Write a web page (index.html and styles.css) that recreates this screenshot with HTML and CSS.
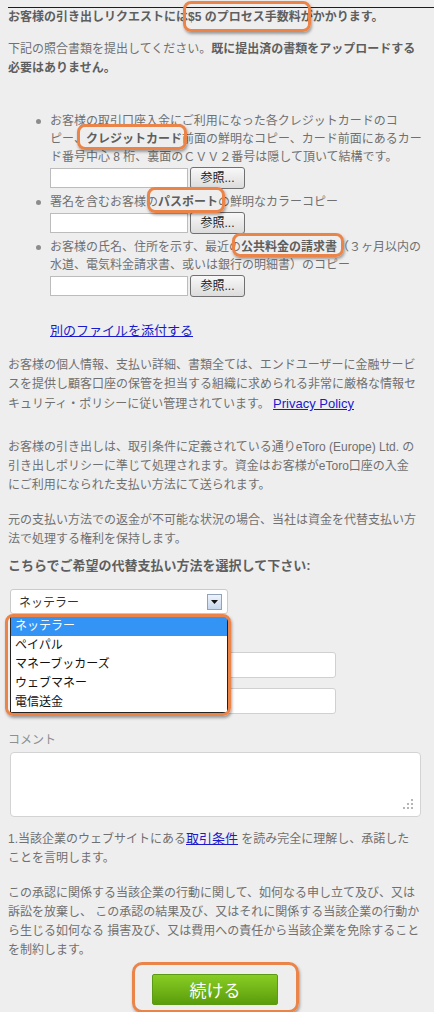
FILE: index.html
```html
<!DOCTYPE html>
<html lang="ja">
<head>
<meta charset="utf-8">
<title>引き出しリクエスト</title>
<link rel="stylesheet" href="styles.css">
</head>
<body>
<div class="topline"></div>
<main class="page">
  <p class="lead"><b>お客様の引き出しリクエストには<span class="mark mark-fee">$5 のプロセス手数料</span>がかかります。</b></p>
  <p class="intro">下記の照合書類を提出してください。<b>既に提出済の書類をアップロードする<br>必要はありません。</b></p>

  <ul class="docs">
    <li class="doc">
      <span class="dot"></span>
      <div class="doc-body">
        <div class="doc-text">お客様の取引口座入金にご利用になった各クレジットカードのコ<br>ピー、<b class="mark mark-card">クレジットカード</b>前面の鮮明なコピー、カード前面にあるカー<br>ド番号中心 8 桁、裏面のＣＶＶ２番号は隠して頂いて結構です。</div>
        <div class="file-row"><span class="file-input"></span><span class="browse">参照...</span></div>
      </div>
    </li>
    <li class="doc">
      <span class="dot"></span>
      <div class="doc-body">
        <div class="doc-text">署名を含むお客様の<b class="mark mark-passport">パスポート</b>の鮮明なカラーコピー</div>
        <div class="file-row"><span class="file-input"></span><span class="browse">参照...</span></div>
      </div>
    </li>
    <li class="doc">
      <span class="dot"></span>
      <div class="doc-body">
        <div class="doc-text">お客様の氏名、住所を示す、最近の<b class="mark mark-bill">公共料金の請求書</b>（３ヶ月以内の<br>水道、電気料金請求書、或いは銀行の明細書）のコピー</div>
        <div class="file-row"><span class="file-input"></span><span class="browse">参照...</span></div>
      </div>
    </li>
  </ul>

  <p class="more"><a href="#">別のファイルを添付する</a></p>

  <p class="info">お客様の個人情報、支払い詳細、書類全ては、エンドユーザーに金融サービ<br>スを提供し顧客口座の保管を担当する組織に求められる非常に厳格な情報セ<br>キュリティ・ポリシーに従い管理されています。 <a href="#">Privacy Policy</a></p>

  <p class="withdraw">お客様の引き出しは、取引条件に定義されている通りeToro (Europe) Ltd. の<br>引き出しポリシーに準じて処理されます。資金はお客様がeToro口座の入金<br>にご利用になられた支払い方法にて送られます。</p>

  <p class="refund">元の支払い方法での返金が不可能な状況の場合、当社は資金を代替支払い方<br>法で処理する権利を保持します。</p>

  <p class="choose">こちらでご希望の代替支払い方法を選択して下さい:</p>

  <div class="picker">
    <div class="select">
      <span>ネッテラー</span>
      <span class="arrow"><svg width="7" height="4" viewBox="0 0 7 4"><polygon points="0,0 7,0 3.5,4" fill="#111"/></svg></span>
    </div>
    <ul class="options">
      <li class="selected">ネッテラー</li>
      <li>ペイパル</li>
      <li>マネーブッカーズ</li>
      <li>ウェブマネー</li>
      <li>電信送金</li>
    </ul>
  </div>

  <div class="fields">
    <div class="field"></div>
    <div class="field"></div>
  </div>

  <p class="comment-label">コメント</p>
  <div class="comment">
    <svg width="10" height="10" viewBox="0 0 10 10">
      <rect x="8" y="0" width="2" height="2" fill="#b5b5b5"/>
      <rect x="4" y="4" width="2" height="2" fill="#b5b5b5"/>
      <rect x="8" y="4" width="2" height="2" fill="#b5b5b5"/>
      <rect x="0" y="8" width="2" height="2" fill="#b5b5b5"/>
      <rect x="4" y="8" width="2" height="2" fill="#b5b5b5"/>
      <rect x="8" y="8" width="2" height="2" fill="#b5b5b5"/>
    </svg>
  </div>

  <p class="ack">1.当該企業のウェブサイトにある<a href="#">取引条件</a> を読み完全に理解し、承諾した<br>ことを言明します。</p>

  <p class="waive">この承認に関係する当該企業の行動に関して、如何なる申し立て及び、又は<br>訴訟を放棄し、 この承認の結果及び、又はそれに関係する当該企業の行動か<br>ら生じる如何なる 損害及び、又は費用への責任から当該企業を免除すること<br>を制約します。</p>

  <div class="actions">
    <button class="continue" type="button">続ける</button>
  </div>
</main>
</body>
</html>
```

FILE: styles.css
```css
html, body {
  margin: 0;
  padding: 0;
}

body {
  background: #eeeeee;
  font-family: "Liberation Sans", "Noto Sans CJK JP", sans-serif;
  font-size: 12px;
  color: #707070;
}

.topline {
  margin: 7px 0 0 8px;
  height: 1px;
  background: #1e1e1e;
}

.page {
  padding: 0 12px 40px 8px;
}

p {
  margin: 0;
  line-height: 19px;
  white-space: nowrap;
}

b {
  color: #5e5e5e;
}

a {
  color: #1a1acc;
  text-decoration: underline;
  font-size: 13px;
}

.intro {
  margin-top: 13px;
}

/* document list */
.docs {
  list-style: none;
  margin: 34px 0 0;
  padding: 0 0 0 28px;
}

.doc {
  display: grid;
  grid-template-columns: 14px auto;
  line-height: 18px;
}

.doc + .doc {
  margin-top: 4px;
}

.dot {
  width: 5px;
  height: 5px;
  border-radius: 50%;
  background: #8c8c8c;
  margin-top: 7px;
}

.doc-text {
  white-space: nowrap;
}

.file-row {
  display: flex;
  align-items: center;
  gap: 2px;
  height: 22px;
  margin-top: 1px;
}

.file-input {
  width: 138px;
  height: 20px;
  box-sizing: border-box;
  background: #ffffff;
  border: 1px solid #bcbcbc;
}

.browse {
  width: 55px;
  height: 22px;
  box-sizing: border-box;
  border: 1px solid #707070;
  border-radius: 3px;
  background: linear-gradient(#f8f8f8, #dcdcdc);
  color: #222222;
  display: flex;
  align-items: center;
  justify-content: center;
}

.more {
  margin-top: 24px;
  padding-left: 42px;
}

.info {
  margin-top: 15px;
}

.withdraw {
  margin-top: 24px;
}

.refund {
  margin-top: 16px;
}

.choose {
  margin-top: 7px;
  font-size: 13px;
  font-weight: bold;
  color: #5e5e5e;
}

/* select + open dropdown */
.picker {
  position: relative;
  width: 218px;
  margin: 14px 0 0 2px;
}

.select {
  height: 25px;
  box-sizing: border-box;
  border: 1px solid #cbcbcb;
  border-radius: 3px;
  background: #ffffff;
  display: flex;
  align-items: center;
  justify-content: space-between;
  padding: 0 5px 0 8px;
  color: #333333;
}

.arrow {
  width: 15px;
  height: 16px;
  box-sizing: border-box;
  border: 1px solid #8fa3bb;
  background: linear-gradient(#eef4fb, #c6d6ec);
  display: flex;
  align-items: center;
  justify-content: center;
}

.options {
  position: absolute;
  top: 27px;
  left: 0;
  width: 218px;
  box-sizing: border-box;
  margin: 0;
  padding: 0;
  list-style: none;
  border: 1px solid #222222;
  background: #ffffff;
  color: #111111;
  z-index: 2;
}

.options li {
  height: 19px;
  line-height: 19px;
  padding-left: 4px;
}

.options li.selected {
  background: #3394f5;
  color: #ffffff;
}

.fields {
  margin: 38px 0 0 2px;
  display: flex;
  flex-direction: column;
  gap: 10px;
}

.field {
  width: 326px;
  height: 26px;
  box-sizing: border-box;
  background: #ffffff;
  border: 1px solid #d0d0d0;
  border-radius: 3px;
}

.comment-label {
  margin-top: 17px;
  color: #8f8f8f;
}

.comment {
  margin: 2px 0 0 2px;
  width: 411px;
  height: 65px;
  box-sizing: border-box;
  background: #ffffff;
  border: 1px solid #d3d3d3;
  border-radius: 4px;
  display: flex;
  justify-content: flex-end;
  align-items: flex-end;
  padding: 0 7px 7px 0;
}

.ack {
  margin-top: 12px;
}

.waive {
  margin-top: 16px;
}

.actions {
  display: flex;
  justify-content: center;
  margin-top: 14px;
}

.continue {
  position: relative;
  width: 126px;
  height: 31px;
  padding: 0;
  border: 1px solid #5b9a12;
  border-radius: 2px;
  background: linear-gradient(#88cd24, #5a9d0c);
  color: #ffffff;
  font-family: "Noto Sans CJK JP", sans-serif;
  font-size: 17px;
}

/* orange annotation highlights */
.mark {
  position: relative;
}

.mark::after,
.options::after,
.continue::after {
  content: "";
  position: absolute;
  border: 3px solid #eb8449;
  border-radius: 8px;
  box-shadow: 1px 2px 3px rgba(0, 0, 0, 0.35);
  pointer-events: none;
}

.mark-fee::after {
  top: -9px;
  bottom: -8px;
  left: -5px;
  right: -10px;
}

.mark-card::after {
  top: -8px;
  bottom: -4px;
  left: -9px;
  right: -5px;
}

.mark-passport::after {
  top: -8px;
  bottom: -4px;
  left: -11px;
  right: -7px;
}

.mark-bill::after {
  top: -7px;
  bottom: -3px;
  left: -9px;
  right: -7px;
}

.options::after {
  top: -3px;
  bottom: -4px;
  left: -6px;
  right: -4px;
}

.continue::after {
  top: -13px;
  bottom: -9px;
  left: -21px;
  right: -22px;
  border-radius: 10px;
}
```
